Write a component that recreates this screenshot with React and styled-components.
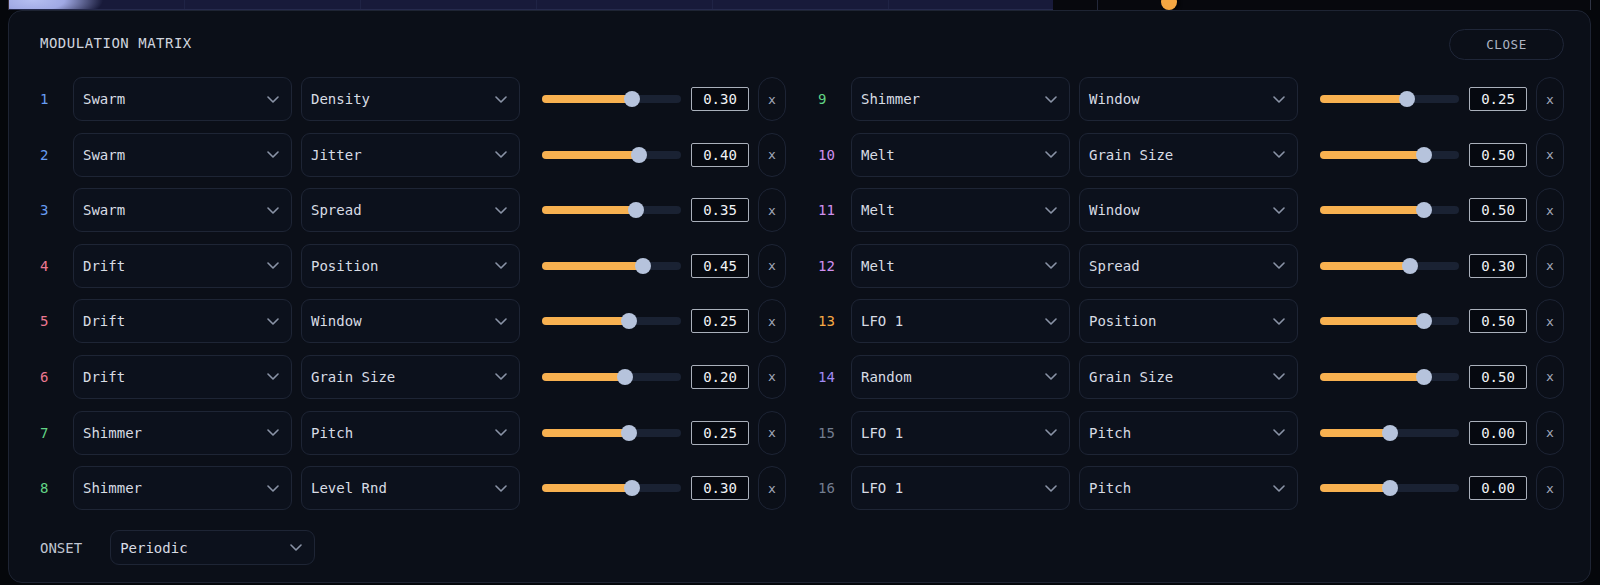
import React from "react";
import styled, { createGlobalStyle } from "styled-components";

const GlobalStyle = createGlobalStyle`
  html, body { margin: 0; padding: 0; background: #05070b; }
  body { font-family: "DejaVu Sans Mono", "Liberation Mono", monospace; }
  * { box-sizing: border-box; }
`;

const Page = styled.div`
  width: 1600px;
  height: 585px;
  overflow: hidden;
  background: #05070b;
  display: flex;
  flex-direction: column;
`;

const Strip = styled.div`
  height: 10px;
  flex: none;
  display: flex;
  padding-left: 8px;
  overflow: hidden;
`;

const NavyArea = styled.div`
  width: 1045px;
  height: 10px;
  border-left: 1px solid #3a2f36;
  border-bottom: 1px solid #262a4d;
  background:
    radial-gradient(ellipse 70px 24px at 24px 0px, #b6bff1 0%, #a0a9e4 45%, rgba(24, 26, 58, 0) 100%),
    repeating-linear-gradient(90deg, transparent 0 175px, #1f2345 175px 176px),
    #181a3a;
`;

const DarkArea = styled.div`
  width: 538px;
  height: 10px;
  background: #07080d;
  border-right: 1px solid #2f3444;
  display: flex;
  align-items: flex-start;
`;

const DarkCell = styled.div`
  width: 45px;
  height: 10px;
  border-right: 1px solid #23283a;
  flex: none;
`;

const OrangeKnob = styled.div`
  width: 16px;
  height: 16px;
  margin-left: 63px;
  margin-top: -6px;
  border-radius: 50%;
  background: #f5a742;
  box-shadow: 3px 1px 3px rgba(0, 0, 0, 0.7);
  flex: none;
`;

const Panel = styled.div`
  margin-left: 8px;
  width: 1583px;
  border: 1px solid #1e2433;
  border-radius: 14px;
  background: #0b0f18;
  padding: 18px 26px 17px 31px;
  display: flex;
  flex-direction: column;
`;

const Header = styled.div`
  height: 31px;
  display: flex;
  align-items: center;
  justify-content: space-between;
`;

const Title = styled.div`
  font-size: 14px;
  letter-spacing: 0.5px;
  color: #cfd4de;
  padding-bottom: 3px;
`;

const CloseButton = styled.button`
  width: 115px;
  height: 31px;
  border: 1px solid #1f2638;
  border-radius: 16px;
  background: transparent;
  color: #aeb5c3;
  font-family: inherit;
  font-size: 12.5px;
  letter-spacing: 0.6px;
  padding: 0;
`;

const Matrix = styled.div`
  margin-top: 17px;
  display: grid;
  grid-template-columns: 1fr 1fr;
  column-gap: 32px;
`;

const Column = styled.div`
  display: flex;
  flex-direction: column;
  gap: 11.6px;
`;

const Row = styled.div`
  height: 44px;
  display: grid;
  grid-template-columns: 24px 219px 219px 1fr 58px 28px;
  column-gap: 9px;
  align-items: center;
`;

const Index = styled.div`
  font-size: 14px;
  color: ${(p) => p.$color};
`;

const Select = styled.div`
  height: ${(p) => p.$h || 44}px;
  width: ${(p) => (p.$w ? `${p.$w}px` : "auto")};
  border: 1px solid #1e2535;
  border-radius: 9px;
  background: #0c111c;
  display: flex;
  align-items: center;
  justify-content: space-between;
  padding: 0 12px 0 9px;
  font-size: 14px;
  color: #d8dce4;
`;

const SliderCell = styled.div`
  padding: 0 1px 0 13px;
`;

const Track = styled.div`
  position: relative;
  height: 8px;
  border-radius: 4px;
  background: #1a2233;
`;

const Fill = styled.div`
  height: 8px;
  border-radius: 4px;
  background: #f8b150;
`;

const Thumb = styled.div`
  position: absolute;
  top: 50%;
  width: 16px;
  height: 16px;
  border-radius: 50%;
  background: #b6c3dc;
  transform: translate(-50%, -50%);
`;

const ValueBox = styled.div`
  height: 24px;
  border: 1.5px solid #aab0bb;
  border-radius: 2px;
  background: #060910;
  color: #f1f3f6;
  font-size: 14px;
  display: flex;
  align-items: center;
  justify-content: center;
`;

const RemoveButton = styled.button`
  width: 28px;
  height: 44px;
  border: 1px solid #1d2435;
  border-radius: 14px;
  background: transparent;
  color: #a2aaba;
  font-family: inherit;
  font-size: 13px;
  padding: 0;
`;

const OnsetRow = styled.div`
  margin-top: 20px;
  display: flex;
  align-items: center;
  gap: 28px;
`;

const OnsetLabel = styled.div`
  font-size: 14px;
  color: #c0c6d2;
`;

const Chevron = () => (
  <svg width="12" height="7" viewBox="0 0 12 7" fill="none">
    <path d="M1 1 L6 6 L11 1" stroke="#8a93a6" strokeWidth="1.6" strokeLinecap="round" strokeLinejoin="round" />
  </svg>
);

const COLORS = {
  Swarm: "#679cf2",
  Drift: "#ec7891",
  Shimmer: "#62d486",
  Melt: "#d08ff0",
  "LFO 1": "#f7aa45",
  Random: "#a08af5",
};

const LEFT = [
  [1, "Swarm", "Density", 0.3],
  [2, "Swarm", "Jitter", 0.4],
  [3, "Swarm", "Spread", 0.35],
  [4, "Drift", "Position", 0.45],
  [5, "Drift", "Window", 0.25],
  [6, "Drift", "Grain Size", 0.2],
  [7, "Shimmer", "Pitch", 0.25],
  [8, "Shimmer", "Level Rnd", 0.3],
];

const RIGHT = [
  [9, "Shimmer", "Window", 0.25],
  [10, "Melt", "Grain Size", 0.5],
  [11, "Melt", "Window", 0.5],
  [12, "Melt", "Spread", 0.3],
  [13, "LFO 1", "Position", 0.5],
  [14, "Random", "Grain Size", 0.5],
  [15, "LFO 1", "Pitch", 0.0],
  [16, "LFO 1", "Pitch", 0.0],
];

const Slot = ({ n, src, dst, amt }) => {
  const pct = ((amt + 1) / 2) * 100;
  const color = amt === 0 ? "#737d90" : COLORS[src];
  return (
    <Row>
      <Index $color={color}>{n}</Index>
      <Select>
        <span>{src}</span>
        <Chevron />
      </Select>
      <Select>
        <span>{dst}</span>
        <Chevron />
      </Select>
      <SliderCell>
        <Track>
          <Fill style={{ width: `${pct}%` }} />
          <Thumb style={{ left: `${pct}%` }} />
        </Track>
      </SliderCell>
      <ValueBox>{amt.toFixed(2)}</ValueBox>
      <RemoveButton>x</RemoveButton>
    </Row>
  );
};

export default function App() {
  return (
    <>
      <GlobalStyle />
      <Page>
        <Strip>
          <NavyArea />
          <DarkArea>
            <DarkCell />
            <OrangeKnob />
          </DarkArea>
        </Strip>
        <Panel>
          <Header>
            <Title>MODULATION MATRIX</Title>
            <CloseButton>CLOSE</CloseButton>
          </Header>
          <Matrix>
            <Column>
              {LEFT.map(([n, s, d, a]) => (
                <Slot key={n} n={n} src={s} dst={d} amt={a} />
              ))}
            </Column>
            <Column>
              {RIGHT.map(([n, s, d, a]) => (
                <Slot key={n} n={n} src={s} dst={d} amt={a} />
              ))}
            </Column>
          </Matrix>
          <OnsetRow>
            <OnsetLabel>ONSET</OnsetLabel>
            <Select $w={205} $h={35}>
              <span>Periodic</span>
              <Chevron />
            </Select>
          </OnsetRow>
        </Panel>
      </Page>
    </>
  );
}
